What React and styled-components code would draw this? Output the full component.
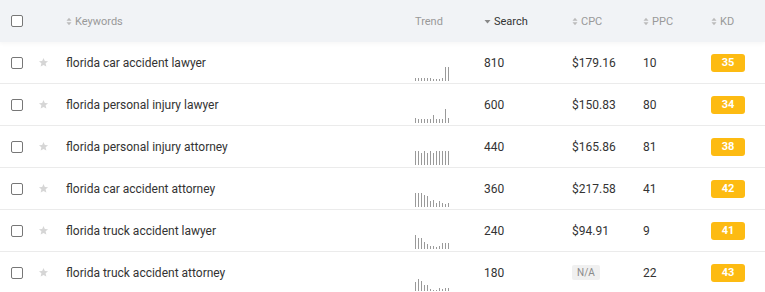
import React from "react";
import styled, { createGlobalStyle } from "styled-components";

const Global = createGlobalStyle`
  html, body { margin: 0; padding: 0; background: #fff; }
  body { font-family: Roboto, "Noto Sans", Arial, sans-serif; -webkit-font-smoothing: antialiased; }
`;

const cols = "38px 28px 349px 69px 88px 71px 68px 54px";

const Table = styled.div`
  width: 765px;
  overflow: hidden;
`;

const HeaderRow = styled.div`
  display: grid;
  grid-template-columns: ${cols};
  height: 42px;
  align-items: center;
  background: #f1f3f6;
  box-shadow: 0 2px 4px rgba(0, 0, 0, 0.035);
  position: relative;
  z-index: 1;
`;

const Row = styled.div`
  display: grid;
  grid-template-columns: ${cols};
  height: 42px;
  align-items: center;
  border-bottom: 1px solid #ebebeb;
  box-sizing: border-box;
  color: #333;
  font-size: 12px;
`;

const CheckCell = styled.div`
  padding-left: 11px;
  display: flex;
  align-items: center;
`;

const Checkbox = styled.span`
  display: block;
  width: 12px;
  height: 12px;
  box-sizing: border-box;
  border: 1.5px solid #777;
  border-radius: 2px;
  background: #fff;
`;

const StarCell = styled.div`
  display: flex;
  align-items: center;
`;

const HeadCell = styled.div`
  display: flex;
  align-items: center;
  gap: 3px;
  font-size: 11px;
  color: ${(p) => (p.$active ? "#333" : "#999")};
`;

const KeywordCell = styled.div`
  font-size: 12px;
  color: #333;
  white-space: nowrap;
`;

const Cell = styled.div`
  font-size: 12px;
  color: #333;
`;

const TrendCell = styled.div`
  align-self: end;
  padding-bottom: 2px;
  display: flex;
  align-items: flex-end;
  gap: 2px;
  height: 14px;
`;

const Bar = styled.span`
  display: block;
  width: 1px;
  height: ${(p) => p.$h}px;
  background: #9a9a9a;
`;

const KD = styled.span`
  display: inline-flex;
  align-items: center;
  justify-content: center;
  width: 34px;
  height: 18px;
  border-radius: 3px;
  background: #fdbb12;
  color: #fff;
  font-weight: 700;
  font-size: 11px;
`;

const NA = styled.span`
  display: inline-flex;
  align-items: center;
  justify-content: center;
  padding: 0 5px;
  height: 15px;
  border-radius: 2px;
  background: #f0f0f0;
  color: #8a8a8a;
  font-size: 10px;
`;

const SortIcon = ({ active }) =>
  active ? (
    <svg width="7" height="9" viewBox="0 0 7 9">
      <polygon points="0.5,3 6.5,3 3.5,6.5" fill="#888" />
    </svg>
  ) : (
    <svg width="6" height="9" viewBox="0 0 6 9">
      <polygon points="0.5,3.8 5.5,3.8 3,0.8" fill="#bbb" />
      <polygon points="0.5,5.2 5.5,5.2 3,8.2" fill="#bbb" />
    </svg>
  );

const Star = () => (
  <svg width="11" height="11" viewBox="0 0 24 24">
    <path
      d="M12 2l2.9 6.6 7.1.6-5.4 4.7 1.6 7L12 17.3 5.8 20.9l1.6-7L2 9.2l7.1-.6z"
      fill="#d6d6d6"
    />
  </svg>
);

const data = [
  { k: "florida car accident lawyer", s: 810, c: "$179.16", p: 10, kd: 35, t: [3, 3, 3, 3, 3, 3, 2, 2, 2, 3, 14, 14] },
  { k: "florida personal injury lawyer", s: 600, c: "$150.83", p: 80, kd: 34, t: [5, 4, 4, 4, 4, 4, 8, 4, 4, 4, 14, 5] },
  { k: "florida personal injury attorney", s: 440, c: "$165.86", p: 81, kd: 38, t: [14, 14, 12, 14, 12, 14, 12, 14, 14, 14, 14, 14] },
  { k: "florida car accident attorney", s: 360, c: "$217.58", p: 41, kd: 42, t: [14, 14, 14, 12, 11, 6, 7, 4, 6, 4, 3, 4] },
  { k: "florida truck accident lawyer", s: 240, c: "$94.91", p: 9, kd: 41, t: [14, 11, 11, 7, 5, 3, 3, 2, 3, 6, 6, 6] },
  { k: "florida truck accident attorney", s: 180, c: null, p: 22, kd: 43, t: [9, 12, 10, 6, 6, 2, 1, 1, 3, 2, 3, 3] },
];

export default function App() {
  return (
    <Table>
      <Global />
      <HeaderRow>
        <CheckCell>
          <Checkbox />
        </CheckCell>
        <div />
        <HeadCell>
          <SortIcon /> Keywords
        </HeadCell>
        <HeadCell>Trend</HeadCell>
        <HeadCell $active>
          <SortIcon active /> Search
        </HeadCell>
        <HeadCell>
          <SortIcon /> CPC
        </HeadCell>
        <HeadCell>
          <SortIcon /> PPC
        </HeadCell>
        <HeadCell>
          <SortIcon /> KD
        </HeadCell>
      </HeaderRow>
      {data.map((r) => (
        <Row key={r.k}>
          <CheckCell>
            <Checkbox />
          </CheckCell>
          <StarCell>
            <Star />
          </StarCell>
          <KeywordCell>{r.k}</KeywordCell>
          <TrendCell>
            {r.t.map((h, i) => (
              <Bar key={i} $h={h} />
            ))}
          </TrendCell>
          <Cell>{r.s}</Cell>
          <Cell>{r.c ? r.c : <NA>N/A</NA>}</Cell>
          <Cell>{r.p}</Cell>
          <Cell>
            <KD>{r.kd}</KD>
          </Cell>
        </Row>
      ))}
    </Table>
  );
}
